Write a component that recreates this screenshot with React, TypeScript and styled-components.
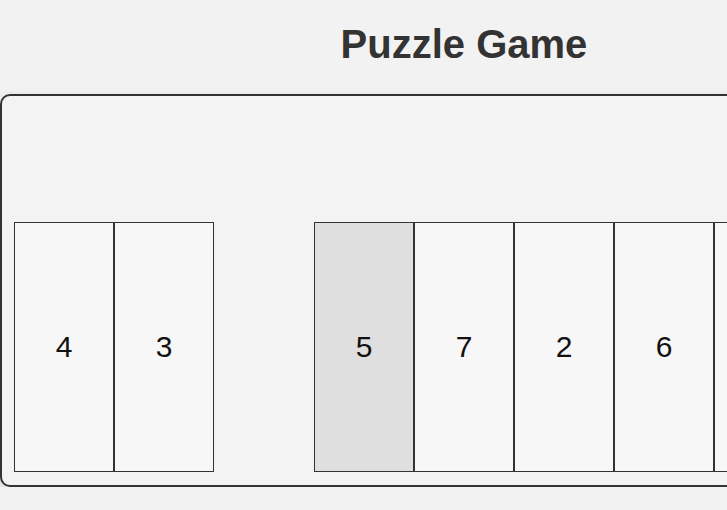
import React from "react";
import styled, { createGlobalStyle } from "styled-components";

const GlobalStyle = createGlobalStyle`
  html, body {
    margin: 0;
    padding: 0;
    background: #f2f2f2;
    font-family: "Liberation Sans", Arial, sans-serif;
  }
`;

const Page = styled.div`
  width: max-content;
  padding-top: 21px;
`;

const Title = styled.h1`
  margin: 0 0 27px;
  font-size: 40px;
  line-height: 46px;
  font-weight: 700;
  color: #333;
  text-align: center;
`;

const Board = styled.div`
  display: flex;
  align-items: flex-start;
  padding: 126px 12px 13px;
  border: 2px solid #333;
  border-radius: 10px;
  background: #f3f3f3;
  box-shadow: 0 3px 10px rgba(0, 0, 0, 0.15);
`;

const Slot = styled.div<{ $empty?: boolean; $active?: boolean }>`
  box-sizing: border-box;
  width: 100px;
  height: 250px;
  display: flex;
  align-items: center;
  justify-content: center;
  font-size: 30px;
  color: #111;
  border: ${(p) => (p.$empty ? "none" : "1px solid #333")};
  background: ${(p) => (p.$empty ? "transparent" : p.$active ? "#dfdfdf" : "#f7f7f7")};
`;

const tiles: (number | null)[] = [4, 3, null, 5, 7, 2, 6, 1, 8];

export default function App() {
  return (
    <>
      <GlobalStyle />
      <Page>
        <Title>Puzzle Game</Title>
        <Board>
          {tiles.map((t, i) =>
            t === null ? (
              <Slot key={i} $empty />
            ) : (
              <Slot key={i} $active={t === 5}>
                {t}
              </Slot>
            )
          )}
        </Board>
      </Page>
    </>
  );
}
